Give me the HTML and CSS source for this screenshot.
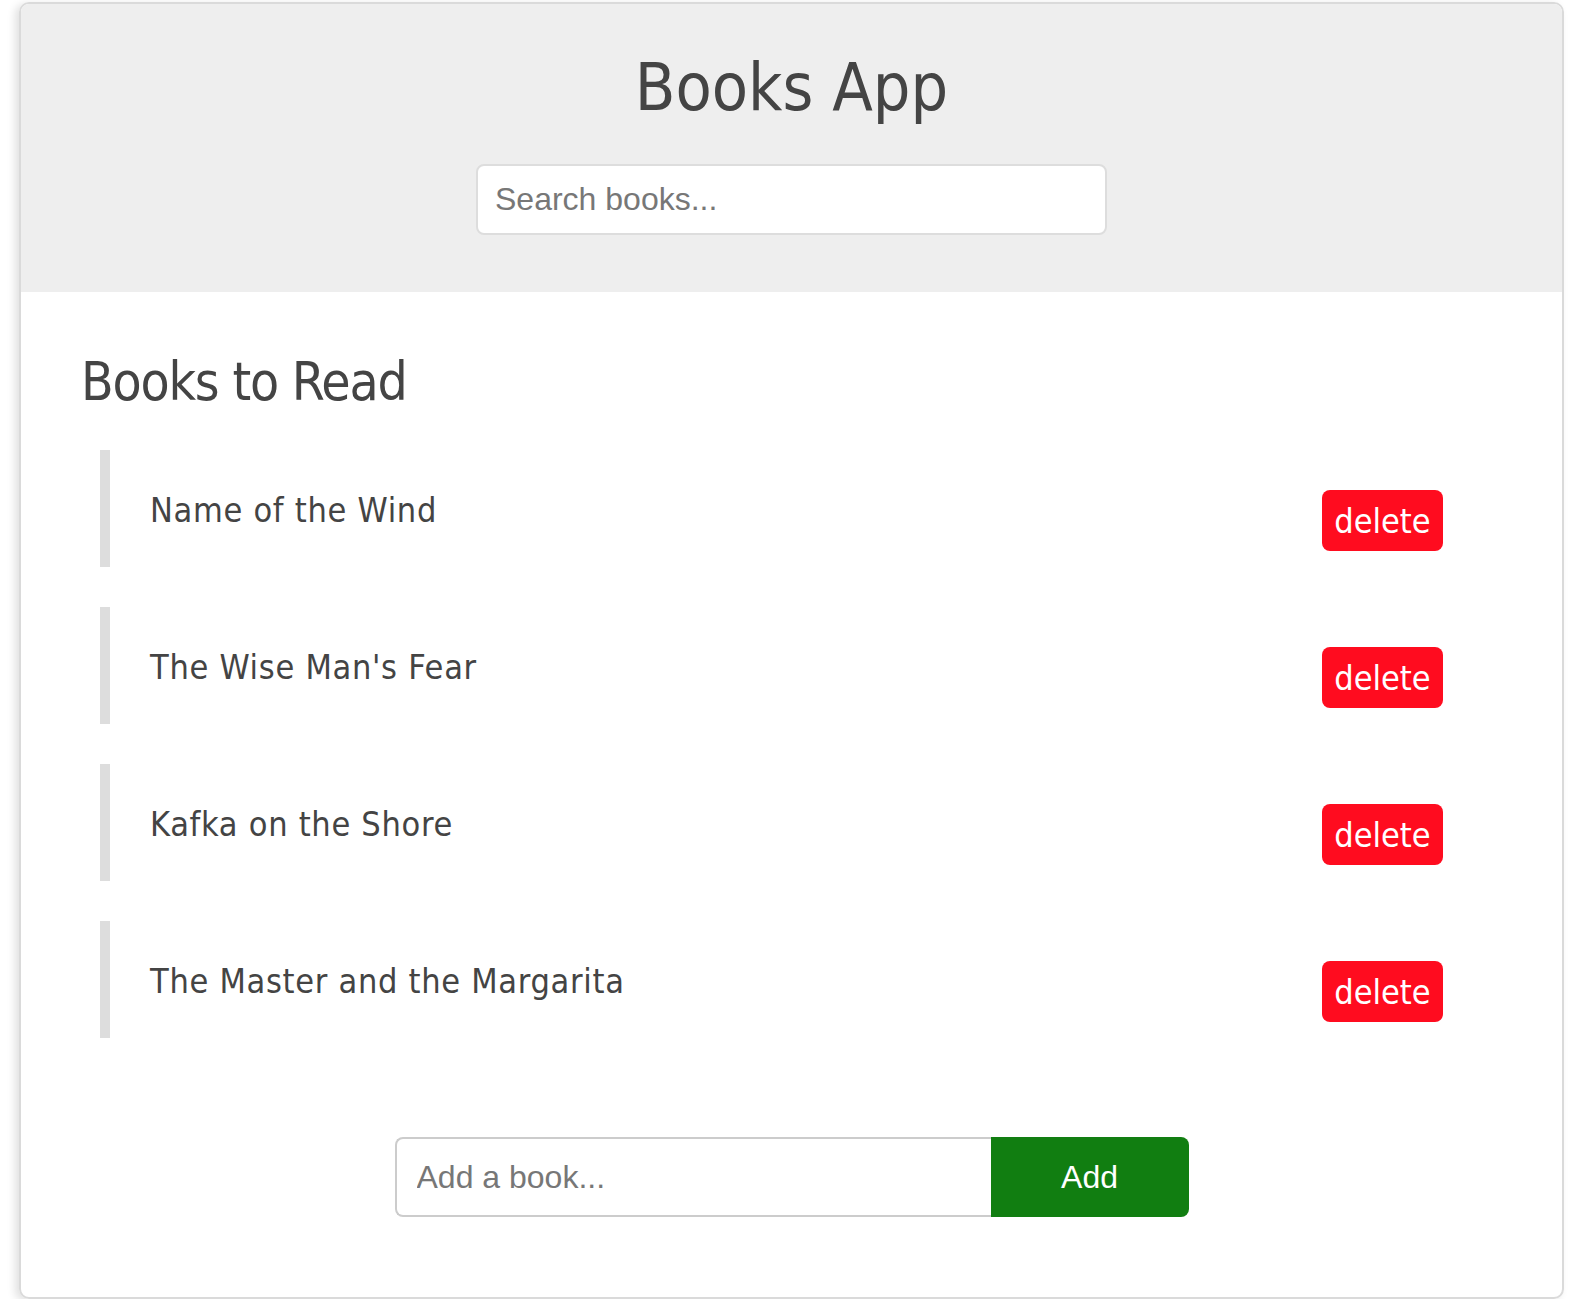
FILE: index.html
```html
<!DOCTYPE html>
<html>
<head>
<meta charset="utf-8">
<link rel="stylesheet" href="styles.css">
<title>Books App</title>
</head>
<body>
<div class="wrapper">
  <header class="header">
    <h1 class="title">Books App</h1>
    <form class="search-books">
      <input class="search-input" type="text" placeholder="Search books...">
    </form>
  </header>
  <main class="book-list">
    <h2 class="list-title">Books to Read</h2>
    <ul class="books">
      <li class="book"><span class="name">Name of the Wind</span><span class="delete">delete</span></li>
      <li class="book"><span class="name">The Wise Man's Fear</span><span class="delete">delete</span></li>
      <li class="book"><span class="name">Kafka on the Shore</span><span class="delete">delete</span></li>
      <li class="book"><span class="name">The Master and the Margarita</span><span class="delete">delete</span></li>
    </ul>
    <form class="add-book">
      <input class="add-input" type="text" placeholder="Add a book...">
      <button class="add-button" type="button">Add</button>
    </form>
  </main>
</div>
</body>
</html>
```
FILE: styles.css
```css
html, body {
  margin: 0;
  padding: 0;
  background: #fff;
  overflow: hidden;
}
body {
  font-family: "DejaVu Sans Condensed", "DejaVu Sans", sans-serif;
  font-stretch: condensed;
  color: #444;
}
.wrapper {
  box-sizing: border-box;
  width: 1545px;
  height: 1297px;
  margin: 2px 0 0 19px;
  border: 2px solid #dadada;
  border-radius: 10px;
  box-shadow: -4px 2px 8px rgba(0,0,0,0.12);
  overflow: hidden;
  display: flex;
  flex-direction: column;
}
.header {
  background: #eee;
  height: 288px;
  display: flex;
  flex-direction: column;
  align-items: center;
  flex-shrink: 0;
}
.title {
  margin: 44px 0 0;
  font-size: 66px;
  font-weight: normal;
  line-height: 80px;
  color: #444;
}
.search-books {
  margin-top: 36px;
}
.search-input {
  box-sizing: border-box;
  width: 631px;
  height: 71px;
  border: 2px solid #ddd;
  border-radius: 8px;
  padding: 0 17px;
  font-family: "Liberation Sans", Arial, sans-serif;
  font-size: 32px;
  color: #444;
  background: #fff;
  outline: none;
}
.search-input::placeholder,
.add-input::placeholder {
  color: #777;
}
.book-list {
  padding: 52px 60px 0 60px;
  flex: 1;
}
.list-title {
  margin: 0;
  font-size: 53px;
  letter-spacing: -1.2px;
  font-weight: normal;
  line-height: 76px;
  color: #444;
}
.books {
  list-style: none;
  margin: 30px 0 0;
  padding: 0 59px 0 19px;
  display: flex;
  flex-direction: column;
  gap: 40px;
}
.book {
  height: 117px;
  box-sizing: border-box;
  border-left: 10px solid #ddd;
  padding: 0 0 0 40px;
  display: flex;
  align-items: flex-start;
  justify-content: space-between;
}
.name {
  font-size: 34px;
  letter-spacing: 0.7px;
  margin-top: 40px;
  line-height: 40px;
  color: #444;
}
.delete {
  margin-top: 40px;
  background: #ff0c1f;
  color: #fff;
  border-radius: 8px;
  width: 121px;
  height: 61px;
  display: flex;
  align-items: center;
  justify-content: center;
  font-size: 34px;
  line-height: 1;
}
.add-book {
  display: flex;
  justify-content: center;
  margin: 99px 0 0;
}
.add-input {
  box-sizing: border-box;
  width: 596px;
  height: 80px;
  border: 2px solid #ccc;
  border-right: none;
  border-radius: 8px 0 0 8px;
  padding: 0 20px;
  font-family: "Liberation Sans", Arial, sans-serif;
  font-size: 32px;
  color: #444;
  outline: none;
  background: #fff;
}
.add-button {
  box-sizing: border-box;
  width: 198px;
  height: 80px;
  border: none;
  border-radius: 0 8px 8px 0;
  background: #117e11;
  color: #fff;
  font-family: "Liberation Sans", Arial, sans-serif;
  font-size: 32px;
}
```
